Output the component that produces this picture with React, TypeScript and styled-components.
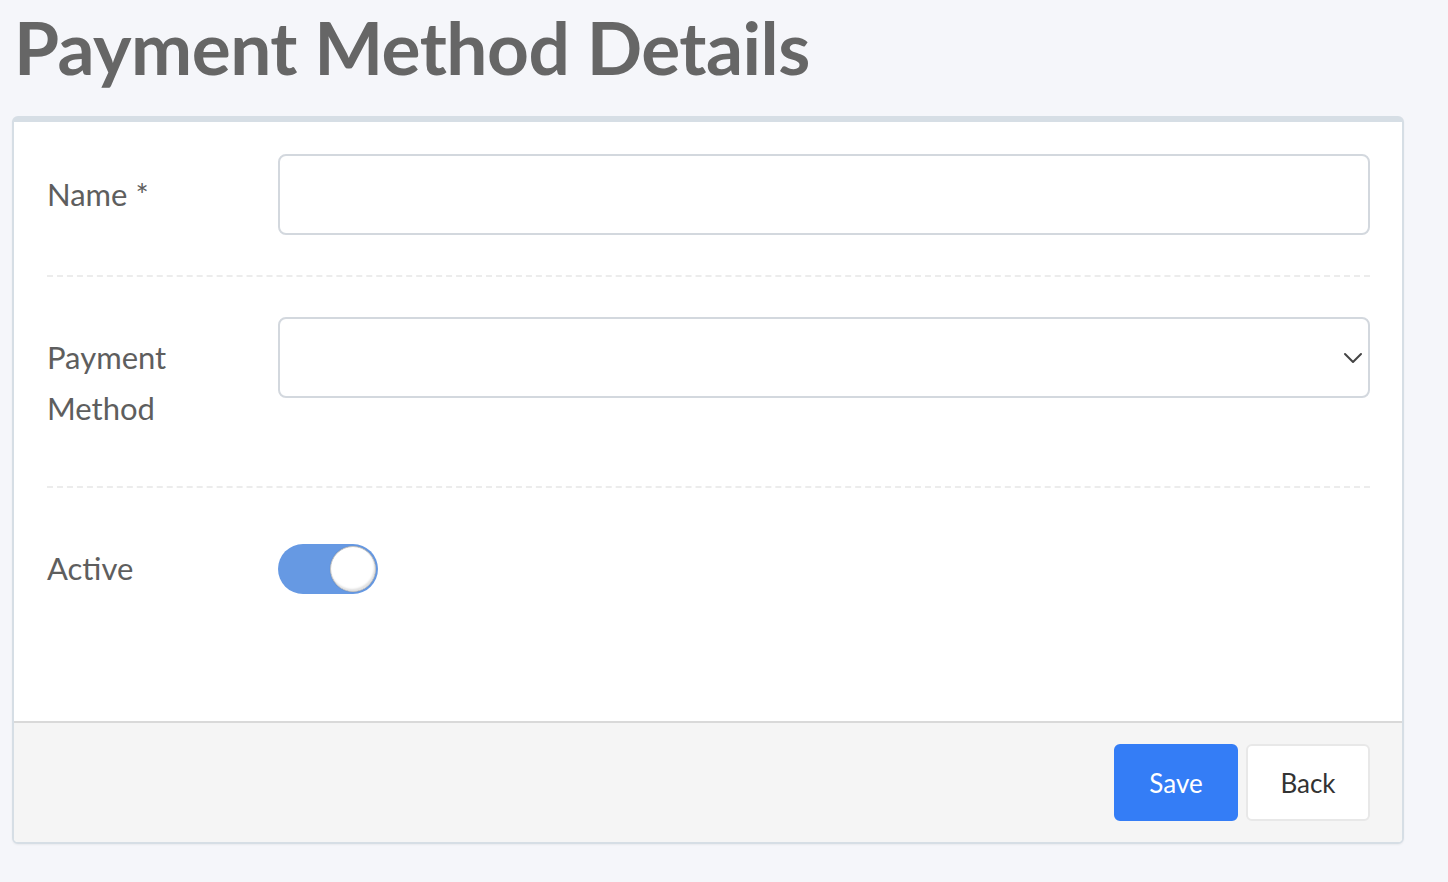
import styled, { createGlobalStyle } from 'styled-components';

const GlobalStyle = createGlobalStyle`
    html, body {
        margin: 0;
        padding: 0;
        background: #f5f6fa;
        font-family: 'Source Sans Pro', 'Lato', 'Noto Sans', sans-serif;
    }
`;

const Page = styled.div`
    width: 1448px;
    min-height: 882px;
    box-sizing: border-box;
    padding: 0 44px 0 12px;
`;

const Title = styled.h1`
    margin: 0;
    padding: 3px 0 0 2px;
    height: 116px;
    box-sizing: border-box;
    font-size: 73px;
    line-height: 88px;
    font-weight: 700;
    color: #666666;
    letter-spacing: -0.5px;
`;

const Card = styled.div`
    background: #ffffff;
    border: 2px solid #d6dee5;
    border-top-width: 6px;
    border-radius: 6px;
    box-shadow: 0 1px 2px rgba(0, 0, 0, 0.05);
    overflow: hidden;
`;

const CardBody = styled.div`
    padding: 32px 32px 71px 33px;
`;

const Row = styled.div<{ divider?: boolean }>`
    display: grid;
    grid-template-columns: 231px 1fr;
    padding-bottom: 40px;
    margin-bottom: 40px;
    border-bottom: 2px dashed ${props => (props.divider ? '#ececec' : 'transparent')};

    &:last-child {
        margin-bottom: 0;
        border-bottom: none;
    }
`;

const Label = styled.div`
    padding: 15px 0 12px;
    font-size: 31px;
    line-height: 51px;
    color: #5e5e5e;
`;

const TextInput = styled.input`
    height: 81px;
    width: 100%;
    box-sizing: border-box;
    border: 2px solid #d3d8de;
    border-radius: 8px;
    background: #ffffff;
    font-family: inherit;
    font-size: 28px;
    padding: 0 20px;
    outline: none;
`;

const SelectBox = styled.div`
    height: 81px;
    box-sizing: border-box;
    border: 2px solid #d3d8de;
    border-radius: 8px;
    background: #ffffff;
    display: flex;
    align-items: center;
    justify-content: flex-end;
`;

const ToggleCell = styled.div`
    height: 81px;
    display: flex;
    align-items: center;
    padding-bottom: 1px;
`;

const Track = styled.div<{ on: boolean }>`
    width: 100px;
    height: 50px;
    border-radius: 25px;
    box-sizing: border-box;
    background: ${props => (props.on ? '#6699e3' : '#d9d9d9')};
    display: flex;
    align-items: center;
    justify-content: ${props => (props.on ? 'flex-end' : 'flex-start')};
    padding: 0 2px;
`;

const Knob = styled.div`
    width: 46px;
    height: 46px;
    border-radius: 50%;
    box-sizing: border-box;
    background: #ffffff;
    border: 1px solid #c4c4c4;
    box-shadow: inset -1px -2px 2px rgba(0, 0, 0, 0.12), 0 0 1px rgba(0, 0, 0, 0.2);
`;

const Footer = styled.div`
    background: #f5f5f5;
    border-top: 2px solid #d9d9d9;
    padding: 21px 32px 21px;
    display: flex;
    justify-content: flex-end;
    gap: 8px;
`;

const Button = styled.button<{ primary?: boolean }>`
    width: 124px;
    height: 77px;
    box-sizing: border-box;
    border-radius: 6px;
    font-family: inherit;
    font-size: 26px;
    cursor: pointer;
    border: 2px solid ${props => (props.primary ? '#347df6' : '#e8e8e8')};
    background: ${props => (props.primary ? '#347df6' : '#ffffff')};
    color: ${props => (props.primary ? '#ffffff' : '#333333')};
`;

const Chevron = () => (
    <svg width="30" height="40" viewBox="0 0 30 40" fill="none">
        <path d="M7 16 L15 24 L23 16" stroke="#444" strokeWidth="2" strokeLinecap="round" strokeLinejoin="round" />
    </svg>
);

const App = () => {
    return (
        <Page>
            <GlobalStyle />
            <Title>Payment Method Details</Title>
            <Card>
                <CardBody>
                    <Row divider>
                        <Label>Name *</Label>
                        <TextInput type="text" />
                    </Row>
                    <Row divider>
                        <Label>Payment<br />Method</Label>
                        <SelectBox>
                            <Chevron />
                        </SelectBox>
                    </Row>
                    <Row>
                        <Label>Active</Label>
                        <ToggleCell>
                            <Track on>
                                <Knob />
                            </Track>
                        </ToggleCell>
                    </Row>
                </CardBody>
                <Footer>
                    <Button primary>Save</Button>
                    <Button>Back</Button>
                </Footer>
            </Card>
        </Page>
    );
};

export default App;
